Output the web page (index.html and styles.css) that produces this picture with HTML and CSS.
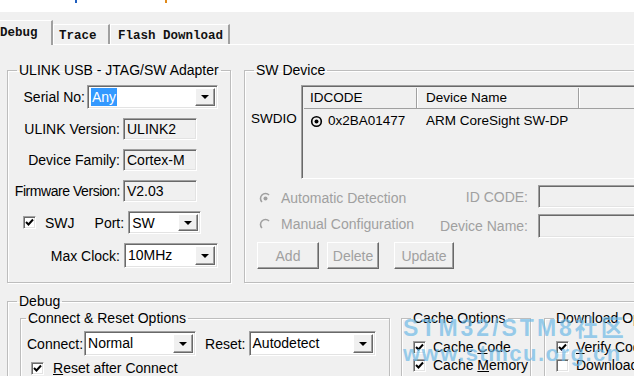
FILE: index.html
```html
<!DOCTYPE html>
<html lang="en">

<head>
    <meta charset="UTF-8">
    <title>Options for Target - Debug</title>
    <link rel="stylesheet" href="styles.css">
</head>

<body>
    <div class="top-strip">
        <span class="mark blue"></span>
        <span class="mark orange"></span>
    </div>

    <div class="tabs">
        <div class="tab active">Debug</div>
        <div class="tab">Trace</div>
        <div class="tab">Flash Download</div>
    </div>

    <div class="panel">
        <div class="upper">
            <fieldset class="group adapter">
                <legend>ULINK USB - JTAG/SW Adapter</legend>

                <div class="row serial">
                    <span class="label">Serial No:</span>
                    <div class="combo"><span class="value"><span class="selected">Any</span></span><span class="drop"><i class="arrow"></i></span></div>
                </div>
                <div class="row info">
                    <span class="label">ULINK Version:</span>
                    <div class="field">ULINK2</div>
                </div>
                <div class="row info">
                    <span class="label">Device Family:</span>
                    <div class="field">Cortex-M</div>
                </div>
                <div class="row info">
                    <span class="label tight">Firmware Version:</span>
                    <div class="field">V2.03</div>
                </div>
                <div class="row swj">
                    <span class="check checked"><svg viewBox="0 0 11 11"><path d="M2 5 L4.5 7.5 L9 2.5" /></svg></span>
                    <span class="swj-text">SWJ</span>
                    <span class="port-label">Port:</span>
                    <div class="combo port"><span class="value">SW</span><span class="drop"><i class="arrow"></i></span></div>
                </div>
                <div class="row clock">
                    <span class="label">Max Clock:</span>
                    <div class="combo"><span class="value">10MHz</span><span class="drop"><i class="arrow"></i></span></div>
                </div>
            </fieldset>

            <fieldset class="group device">
                <legend>SW Device</legend>

                <div class="chain">
                    <span class="chain-label">SWDIO</span>
                    <div class="list">
                        <div class="list-head">
                            <span class="col-id">IDCODE</span>
                            <span class="col-name">Device Name</span>
                            <span class="col-rest"></span>
                        </div>
                        <div class="list-row">
                            <span class="col-id">
                                <svg class="target" viewBox="0 0 13 13"><circle cx="6.5" cy="6.5" r="4.8" /><circle class="dot" cx="6.5" cy="6.5" r="2" /></svg>
                                0x2BA01477
                            </span>
                            <span class="col-name">ARM CoreSight SW-DP</span>
                        </div>
                    </div>
                </div>

                <div class="detect">
                    <span class="radio-line">
                        <svg class="radio" viewBox="0 0 13 13"><circle class="fill" cx="6.5" cy="6.5" r="5" /><path d="M2.96 10.04 A5 5 0 0 1 10.04 2.96" /><circle class="dot" cx="6.5" cy="6.5" r="2" /></svg>
                        Automatic Detection
                    </span>
                    <span class="detect-label">ID CODE:</span>
                    <div class="field blank"></div>

                    <span class="radio-line second">
                        <svg class="radio" viewBox="0 0 13 13"><circle class="fill" cx="6.5" cy="6.5" r="5" /><path d="M2.96 10.04 A5 5 0 0 1 10.04 2.96" /></svg>
                        Manual Configuration
                    </span>
                    <span class="detect-label">Device Name:</span>
                    <div class="field blank"></div>
                </div>

                <div class="buttons">
                    <button class="btn add" disabled>Add</button>
                    <button class="btn delete" disabled>Delete</button>
                    <button class="btn update" disabled>Update</button>
                </div>
            </fieldset>
        </div>

        <fieldset class="group debug">
            <legend>Debug</legend>

            <div class="debug-row">
                <fieldset class="group connect">
                    <legend>Connect &amp; Reset Options</legend>
                    <div class="row connect-row">
                        <span class="connect-label">Connect:</span>
                        <div class="combo connect-combo"><span class="value">Normal</span><span class="drop"><i class="arrow"></i></span></div>
                        <span class="reset-label">Reset:</span>
                        <div class="combo reset-combo"><span class="value">Autodetect</span><span class="drop"><i class="arrow"></i></span></div>
                    </div>
                    <div class="option">
                        <span class="check checked"><svg viewBox="0 0 11 11"><path d="M2 5 L4.5 7.5 L9 2.5" /></svg></span>
                        <span><u>R</u>eset after Connect</span>
                    </div>
                </fieldset>

                <fieldset class="group cache">
                    <legend>Cache Options</legend>
                    <div class="option">
                        <span class="check checked"><svg viewBox="0 0 11 11"><path d="M2 5 L4.5 7.5 L9 2.5" /></svg></span>
                        <span>Cache <u>C</u>ode</span>
                    </div>
                    <div class="option">
                        <span class="check checked"><svg viewBox="0 0 11 11"><path d="M2 5 L4.5 7.5 L9 2.5" /></svg></span>
                        <span>Cache <u>M</u>emory</span>
                    </div>
                </fieldset>

                <fieldset class="group download">
                    <legend>Download Options</legend>
                    <div class="option">
                        <span class="check checked"><svg viewBox="0 0 11 11"><path d="M2 5 L4.5 7.5 L9 2.5" /></svg></span>
                        <span><u>V</u>erify Code</span>
                    </div>
                    <div class="option">
                        <span class="check"></span>
                        <span>Download to Flash</span>
                    </div>
                </fieldset>
            </div>
        </fieldset>
    </div>

    <div class="watermark">
        <div class="wm-title">STM32/STM8社区</div>
        <div class="wm-url">www.stmcu.org.cn</div>
    </div>
</body>

</html>
```

FILE: styles.css
```css
* {
    margin: 0;
    padding: 0;
    box-sizing: border-box;
}

body {
    position: relative;
    width: 634px;
    height: 376px;
    overflow: hidden;
    background: #f0f0f0;
    font-family: 'Liberation Sans', Arial, sans-serif;
    font-size: 14px;
    color: #000;
}

/* strip of the window above the dialog */
.top-strip {
    height: 12px;
    background: #fff;
    display: flex;
}

.mark {
    width: 2px;
    height: 3px;
}

.mark.blue {
    background: #1f5fbf;
    margin-left: 75px;
}

.mark.orange {
    background: #e08a1a;
    margin-left: 88px;
}

/* tabs */
.tabs {
    display: flex;
    align-items: flex-end;
    height: 32px;
    margin-left: -6px;
    font-family: 'Liberation Mono', 'Courier New', monospace;
    font-weight: bold;
    font-size: 12.5px;
}

.tab {
    min-width: 57px;
    height: 20px;
    padding: 4px 6px 0 5px;
    border-top: 1px solid #fff;
    border-left: 1px solid #fff;
    border-right: 2px solid #a0a0a0;
    color: #111;
    white-space: nowrap;
}

.tab.active {
    width: 59px;
    height: 25px;
    padding-top: 5px;
    margin-bottom: -1px;
    background: #f0f0f0;
    position: relative;
    z-index: 1;
}

.tab:last-child {
    width: 120px;
    padding-left: 7px;
}

.panel {
    border-top: 1px solid #fff;
    padding-top: 17px;
}

/* group boxes */
.group {
    min-width: 0;
    flex-shrink: 0;
    border: 1px solid #bdbdbd;
    box-shadow: inset 1px 1px 0 #fff, 1px 1px 0 #fff;
    white-space: nowrap;
}

.group legend {
    margin-left: 9px;
    padding: 0 2px;
    line-height: 16px;
}

.upper {
    display: flex;
    height: 221px;
    margin-left: 7px;
}

.adapter {
    width: 224px;
    padding-top: 7px;
}

.device {
    width: 400px;
    margin-left: 13px;
}

.row {
    display: flex;
    align-items: center;
}

.adapter .row + .row {
    margin-top: 9px;
}

.label {
    text-align: right;
    white-space: nowrap;
}

.label.tight {
    letter-spacing: -0.45px;
}

.serial .label {
    width: 77px;
    margin-right: 2px;
}

.serial .combo {
    width: 131px;
    height: 24px;
}

.info {
    height: 22px;
}

.info .label,
.clock .label {
    width: 112px;
    margin-right: 3px;
}

.clock .label {
    margin-right: 4px;
}

.field {
    width: 74px;
    height: 22px;
    padding: 2px 3px;
    border: 1px solid;
    border-color: #a0a0a0 #fff #fff #a0a0a0;
    box-shadow: inset 1px 1px 0 #696969, inset -1px -1px 0 #e3e3e3;
    line-height: 17px;
}

/* drop-down boxes */
.combo {
    display: flex;
    flex-shrink: 0;
    height: 23px;
    background: #fff;
    border: 1px solid;
    border-color: #a0a0a0 #fff #fff #a0a0a0;
    box-shadow: inset 1px 1px 0 #696969, inset -1px -1px 0 #e3e3e3;
    padding: 2px;
}

.combo .value {
    flex: 1;
    padding-left: 1px;
    line-height: 18px;
    white-space: nowrap;
    overflow: hidden;
}

.selected {
    background: #3399ff;
    color: #fff;
    padding: 1px 1px;
}

.drop {
    width: 20px;
    background: #f0f0f0;
    border: 1px solid;
    border-color: #fff #696969 #696969 #fff;
    box-shadow: inset -1px -1px 0 #a0a0a0;
    display: flex;
    align-items: center;
    justify-content: center;
}

.arrow {
    width: 0;
    height: 0;
    border-left: 4px solid transparent;
    border-right: 4px solid transparent;
    border-top: 4px solid #000;
}

.swj {
    height: 23px;
}

.check {
    flex-shrink: 0;
    width: 13px;
    height: 13px;
    background: #fff;
    border: 1px solid;
    border-color: #a0a0a0 #fff #fff #a0a0a0;
    box-shadow: inset 1px 1px 0 #696969, inset -1px -1px 0 #e3e3e3;
    display: flex;
    align-items: center;
    justify-content: center;
}

.check svg {
    width: 11px;
    height: 11px;
    fill: none;
    stroke: #000;
    stroke-width: 2;
}

.swj .check {
    margin-left: 15px;
}

.swj-text {
    margin-left: 9px;
}

.port-label {
    margin-left: 20px;
    margin-right: 4px;
}

.combo.port {
    width: 73px;
}

.clock .combo {
    width: 94px;
    height: 25px;
}

/* SW device list */
.chain {
    display: flex;
    margin-top: 7px;
}

.chain-label {
    width: 56px;
    padding-left: 6px;
    margin-top: 26px;
    font-size: 13.5px;
}

.list {
    flex: 1;
    height: 94px;
    border: 1px solid;
    border-color: #a0a0a0 #fff #fff #a0a0a0;
    box-shadow: inset 1px 1px 0 #696969;
    padding: 2px 0 0 2px;
    font-size: 13.5px;
}

.list-head {
    display: flex;
    height: 21px;
    border-bottom: 1px solid #a0a0a0;
    line-height: 20px;
}

.list-head span {
    border-right: 1px solid #a0a0a0;
    box-shadow: 1px 0 0 #fff;
}

.col-id {
    width: 113px;
    padding-left: 6px;
    display: flex;
    align-items: center;
    gap: 5px;
}

.col-name {
    width: 162px;
    padding-left: 9px;
}

.col-rest {
    flex: 1;
}

.list-row {
    display: flex;
    margin-top: 3px;
    line-height: 18px;
}

.target {
    width: 13px;
    height: 13px;
    fill: none;
    stroke: #000;
    stroke-width: 1.6;
}

.target .dot {
    fill: #000;
    stroke: none;
}

.detect {
    display: grid;
    grid-template-columns: 156px 123px 1fr;
    grid-template-rows: 23px 24px;
    row-gap: 6px;
    align-items: center;
    margin-top: 6px;
    padding-left: 14px;
    color: #a0a0a0;
}

.radio-line {
    display: flex;
    align-items: center;
    gap: 9px;
    margin-top: 3px;
}

.radio-line.second {
    margin-top: -4px;
}

.radio {
    width: 13px;
    height: 13px;
    fill: none;
    stroke: #a0a0a0;
    stroke-width: 1.6;
}

.radio .fill {
    fill: #f0f0f0;
    stroke: none;
}

.radio .dot {
    fill: #a0a0a0;
    stroke: none;
}

.detect-label {
    text-align: right;
    padding-right: 10px;
}

.field.blank {
    width: auto;
    height: 100%;
}

.buttons {
    display: flex;
    margin-top: 4px;
    padding-left: 12px;
}

.btn {
    height: 27px;
    background: #f0f0f0;
    border: 1px solid;
    border-color: #fff #696969 #696969 #fff;
    box-shadow: inset -1px -1px 0 #a0a0a0;
    font-family: inherit;
    font-size: 14px;
    color: #a0a0a0;
}

.btn.add {
    width: 62px;
}

.btn.delete {
    width: 52px;
    margin-left: 8px;
}

.btn.update {
    width: 60px;
    margin-left: 15px;
}

/* lower debug group */
.debug {
    width: 660px;
    height: 110px;
    margin: 10px 0 0 7px;
    padding-top: 1px;
}

.debug-row {
    display: flex;
    align-items: flex-start;
    padding-left: 12px;
}

.connect {
    width: 370px;
    height: 80px;
    padding-top: 5px;
}

.connect legend {
    margin-left: 5px;
}

.connect-row {
    height: 25px;
}

.connect-label {
    margin-left: 6px;
    margin-right: 1px;
}

.connect-combo {
    width: 112px;
    height: 25px;
}

.reset-label {
    margin-left: 9px;
    margin-right: 3px;
}

.reset-combo {
    width: 127px;
    height: 25px;
}

.option {
    display: flex;
    align-items: center;
    gap: 9px;
    height: 18px;
}

.connect .option {
    margin: 3px 0 0 10px;
}

.cache {
    width: 130px;
    height: 80px;
    margin-left: 11px;
    padding-top: 12px;
}

.download {
    width: 150px;
    height: 80px;
    margin-left: 13px;
    padding-top: 12px;
}

.cache .option,
.download .option {
    gap: 7px;
    margin-left: 11px;
}

/* forum watermark burned into the screenshot */
.watermark {
    position: absolute;
    left: 403px;
    top: 314px;
    color: rgba(110, 185, 230, 0.7);
    font-weight: bold;
    pointer-events: none;
}

.wm-title {
    font-family: 'Liberation Sans', 'Noto Sans CJK SC', sans-serif;
    font-size: 23px;
    letter-spacing: 3px;
    line-height: 28px;
}

.wm-url {
    font-size: 22px;
    letter-spacing: 1.5px;
    line-height: 24px;
}
```
